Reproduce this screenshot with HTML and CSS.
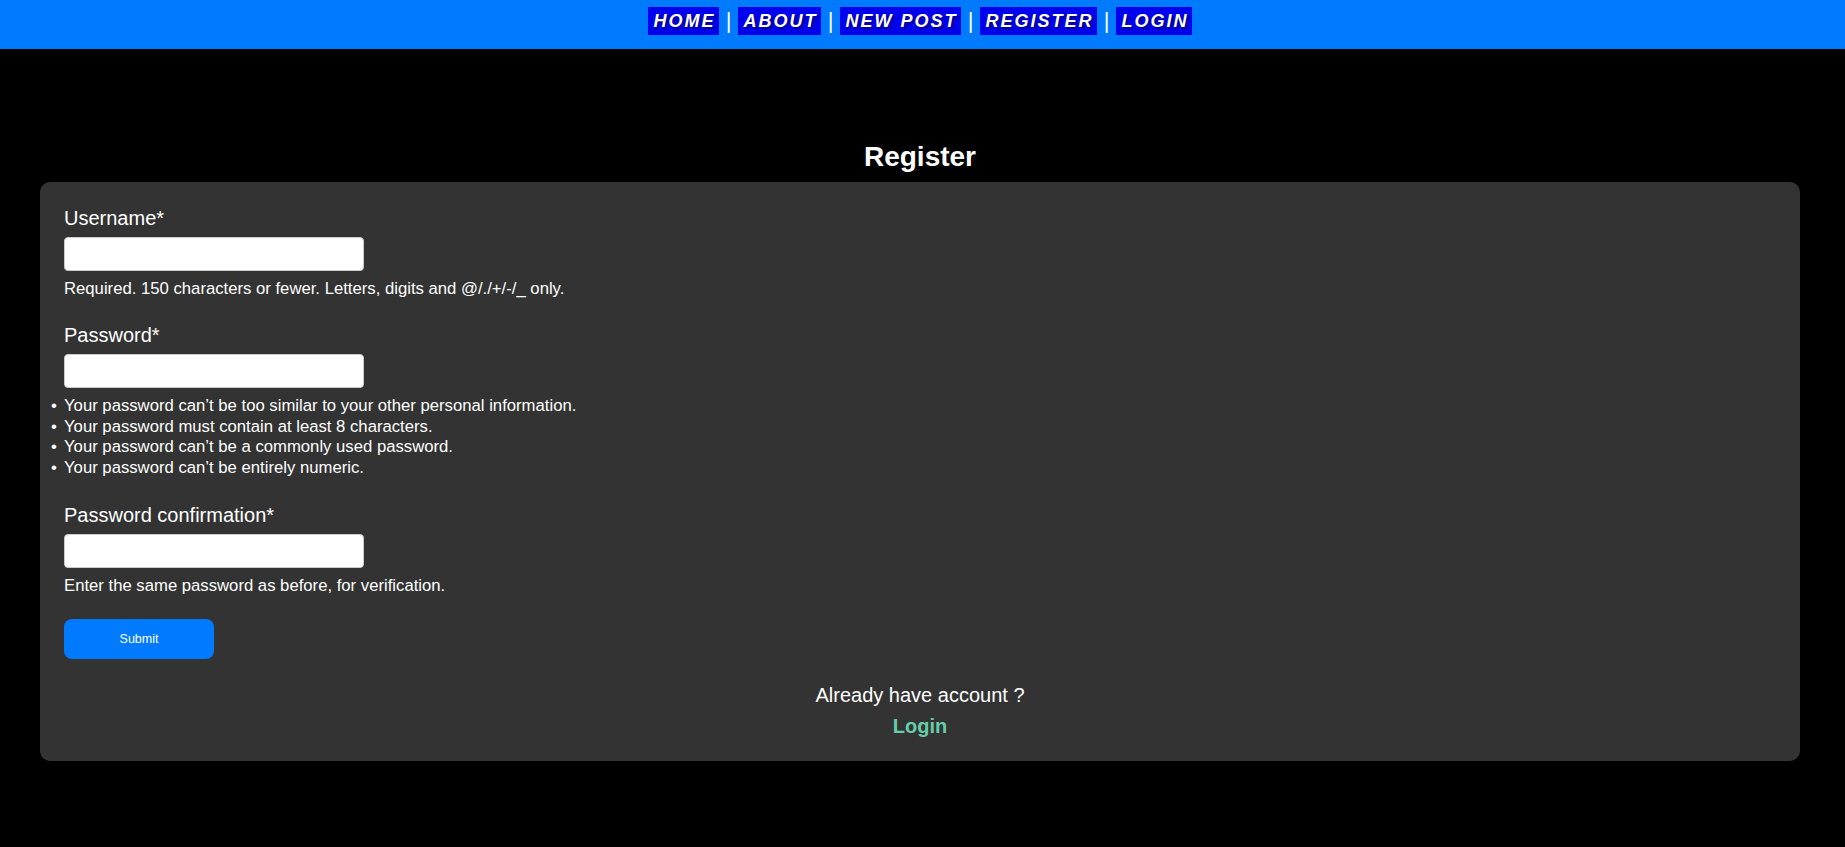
FILE: index.html
```html
<!DOCTYPE html>
<html lang="en">
<head>
<meta charset="utf-8">
<title>Register</title>
<link rel="stylesheet" href="styles.css">
</head>
<body>
<nav class="topnav">
  <a class="navlink" href="#">HOME</a><span class="sep">|</span><a class="navlink" href="#">ABOUT</a><span class="sep">|</span><a class="navlink" href="#">NEW POST</a><span class="sep">|</span><a class="navlink" href="#">REGISTER</a><span class="sep">|</span><a class="navlink" href="#">LOGIN</a>
</nav>
<main class="page">
  <h2 class="title">Register</h2>
  <section class="card">
    <form class="form">
      <div class="field">
        <label class="label" for="u">Username*</label>
        <input class="input" id="u" type="text">
        <p class="help">Required. 150 characters or fewer. Letters, digits and @/./+/-/_ only.</p>
      </div>
      <div class="field">
        <label class="label" for="p1">Password*</label>
        <input class="input" id="p1" type="password">
        <ul class="helplist">
          <li class="helpitem">Your password can’t be too similar to your other personal information.</li>
          <li class="helpitem">Your password must contain at least 8 characters.</li>
          <li class="helpitem">Your password can’t be a commonly used password.</li>
          <li class="helpitem">Your password can’t be entirely numeric.</li>
        </ul>
      </div>
      <div class="field">
        <label class="label" for="p2">Password confirmation*</label>
        <input class="input" id="p2" type="password">
        <p class="help">Enter the same password as before, for verification.</p>
      </div>
      <button class="submit" type="button">Submit</button>
    </form>
    <div class="already">
      <p class="already-text">Already have account ?</p>
      <a class="login-link" href="#">Login</a>
    </div>
  </section>
</main>
</body>
</html>
```
FILE: styles.css
```css
html, body {
  margin: 0;
  padding: 0;
  background: #000;
  color: #fff;
  font-family: "Liberation Sans", Arial, sans-serif;
}

.topnav {
  height: 49px;
  box-sizing: border-box;
  background: #007bff;
  display: flex;
  justify-content: center;
  align-items: flex-start;
  padding: 7px 5px 0 0;
}

.navlink {
  display: block;
  background: #0000ee;
  color: #fff;
  text-decoration: none;
  font-size: 18px;
  font-weight: bold;
  font-style: italic;
  letter-spacing: 2px;
  line-height: 20px;
  padding: 4px 3.5px 4px 5.5px;
  text-shadow: 2px 2px 2px rgba(0, 0, 0, 0.45);
}

.sep {
  display: block;
  width: 19px;
  text-align: center;
  font-size: 22px;
  line-height: 28px;
  color: #fff;
}

.page {
  margin: 0 45px 0 40px;
  padding-top: 92px;
}

.title {
  margin: 0 0 9px;
  text-align: center;
  font-size: 28px;
  line-height: 32px;
  font-weight: bold;
}

.card {
  background: #333;
  border-radius: 10px;
  padding: 25px 24px 23px;
}

.form {
  display: flex;
  flex-direction: column;
  align-items: flex-start;
}

.field {
  margin-bottom: 25px;
}

.field:last-of-type {
  margin-bottom: 23px;
}

.label {
  display: block;
  font-size: 20px;
  line-height: 23px;
  margin-bottom: 7px;
}

.input {
  display: block;
  width: 300px;
  height: 34px;
  box-sizing: border-box;
  border: 1px solid #ccc;
  border-radius: 4px;
  background: #fff;
  margin: 0;
  padding: 4px 8px;
  font-size: 16px;
}

.help {
  margin: 8px 0 0;
  font-size: 16.7px;
  line-height: 20px;
}

.helplist {
  margin: 8px 0 0;
  padding: 0;
  list-style: none;
  font-size: 16.7px;
  line-height: 20.7px;
}

.helpitem::before {
  content: "•";
  display: inline-block;
  width: 13px;
  margin-left: -13px;
}

.submit {
  width: 150px;
  height: 40px;
  border: none;
  border-radius: 8px;
  background: #007bff;
  color: #fff;
  font-family: "Liberation Sans", Arial, sans-serif;
  font-size: 12.5px;
  padding: 0;
}

.already {
  margin-top: 25px;
  display: flex;
  flex-direction: column;
  align-items: center;
}

.already-text {
  margin: 0;
  font-size: 20px;
  line-height: 23px;
}

.login-link {
  margin-top: 8px;
  color: #66cdaa;
  font-weight: bold;
  font-size: 20px;
  line-height: 23px;
  text-decoration: none;
}
```
